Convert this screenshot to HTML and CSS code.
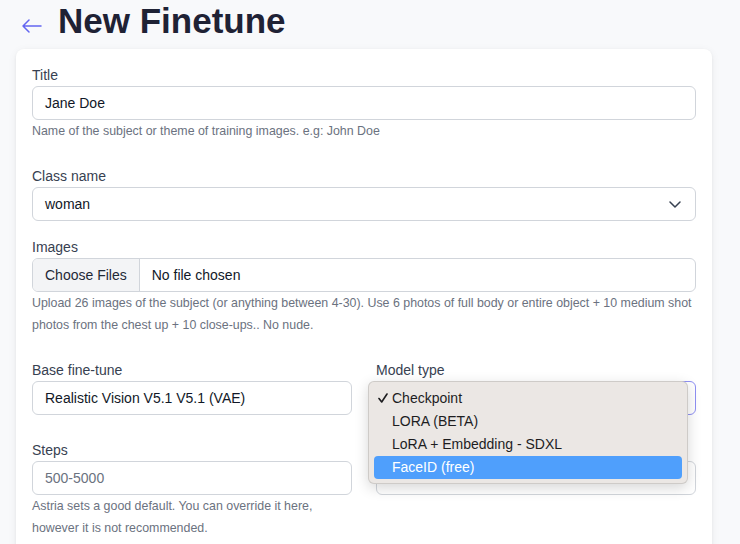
FILE: index.html
```html
<!DOCTYPE html>
<html lang="en">
<head>
<meta charset="utf-8">
<title>New Finetune</title>
<link rel="stylesheet" href="styles.css">
</head>
<body>
<div class="page">
  <header class="header">
    <svg class="back" width="20" height="14" viewBox="0 0 20 14" fill="none" stroke="#6366f1" stroke-width="1.5" stroke-linecap="round" stroke-linejoin="round"><path d="M7 1 L1 7 L7 13 M1 7 H19"/></svg>
    <h1 class="title">New Finetune</h1>
  </header>
  <main class="card">
    <div class="field">
      <label class="label">Title</label>
      <div class="input">Jane Doe</div>
      <p class="help">Name of the subject or theme of training images. e.g: John Doe</p>
    </div>
    <div class="field">
      <label class="label">Class name</label>
      <div class="input select">
        <span>woman</span>
        <svg width="12" height="7" viewBox="0 0 12 7" fill="none" stroke="#374151" stroke-width="1.5" stroke-linecap="round" stroke-linejoin="round"><path d="M1 1 L6 6 L11 1"/></svg>
      </div>
    </div>
    <div class="field">
      <label class="label">Images</label>
      <div class="input file">
        <span class="file-btn">Choose Files</span>
        <span class="file-name">No file chosen</span>
      </div>
      <p class="help">Upload 26 images of the subject (or anything between 4-30). Use 6 photos of full body or entire object + 10 medium shot photos from the chest up + 10 close-ups.. No nude.</p>
    </div>
    <div class="row row-first">
      <div class="col">
        <label class="label">Base fine-tune</label>
        <div class="input">Realistic Vision V5.1 V5.1 (VAE)</div>
      </div>
      <div class="col">
        <label class="label">Model type</label>
        <div class="select-wrap">
          <div class="input focused"></div>
          <ul class="menu">
            <li class="item checked"><svg class="check" width="10" height="10" viewBox="0 0 10 10" fill="none" stroke="#1d1d1f" stroke-width="1.6" stroke-linecap="round" stroke-linejoin="round"><path d="M1 5.5 L3.7 9 L9 1"/></svg>Checkpoint</li>
            <li class="item">LORA (BETA)</li>
            <li class="item">LoRA + Embedding - SDXL</li>
            <li class="item active">FaceID (free)</li>
          </ul>
        </div>
      </div>
    </div>
    <div class="row">
      <div class="col">
        <label class="label">Steps</label>
        <div class="input placeholder">500-5000</div>
        <p class="help">Astria sets a good default. You can override it here, however it is not recommended.</p>
      </div>
      <div class="col">
        <div class="label-space"></div>
        <div class="input"></div>
      </div>
    </div>
  </main>
</div>
</body>
</html>
```

FILE: styles.css
```css
* { box-sizing: border-box; }

html, body {
  margin: 0;
  background: #f8f9fb;
  font-family: "Liberation Sans", Arial, Helvetica, sans-serif;
  color: #111827;
}

.page {
  padding: 1px 0 0 16px;
}

.header {
  display: flex;
  align-items: flex-start;
  height: 40px;
  margin-bottom: 8px;
}

.back {
  margin: 18px 0 0 6px;
  flex: none;
}

.title {
  margin: 0 0 0 16px;
  font-size: 35px;
  line-height: 40px;
  font-weight: 700;
  color: #1f2235;
  letter-spacing: 0;
}

.card {
  width: 696px;
  background: #fff;
  border-radius: 8px;
  box-shadow: 0 1px 3px rgba(0, 0, 0, 0.06), 0 2px 10px rgba(0, 0, 0, 0.06);
  padding: 16px 16px 40px;
}

.field {
  margin-bottom: 16px;
}

.label {
  display: block;
  font-size: 14px;
  line-height: 20px;
  color: #374151;
  margin-bottom: 1px;
}

.label-space {
  height: 21px;
}

.input {
  height: 34px;
  border: 1px solid #d1d5db;
  border-radius: 6px;
  padding: 0 12px;
  font-size: 14px;
  line-height: 32px;
  color: #111827;
  background: #fff;
  white-space: nowrap;
  overflow: hidden;
}

.placeholder {
  color: #6b7280;
}

.select {
  display: flex;
  align-items: center;
  justify-content: space-between;
  padding-right: 14px;
}

.file {
  display: flex;
  padding: 0;
}

.file-btn {
  background: #f3f4f6;
  border-right: 1px solid #d1d5db;
  padding: 0 12px;
  color: #1f2937;
}

.file-name {
  padding-left: 12px;
}

.help {
  margin: 0;
  padding-bottom: 8px;
  font-size: 12.4px;
  line-height: 22px;
  color: #6b7280;
}

.row {
  display: grid;
  grid-template-columns: 1fr 1fr;
  column-gap: 24px;
}

.row-first {
  margin-bottom: 25px;
}

.select-wrap {
  position: relative;
}

.focused {
  border-color: #8f90f3;
}

.menu {
  position: absolute;
  top: 0;
  left: -8px;
  width: 320px;
  margin: 0;
  padding: 5px 5px 4px;
  list-style: none;
  background: #ebe7e4;
  border: 1px solid rgba(0, 0, 0, 0.12);
  border-radius: 6px;
  box-shadow: 0 4px 14px rgba(0, 0, 0, 0.16);
  z-index: 2;
}

.item {
  position: relative;
  height: 23px;
  line-height: 23px;
  padding-left: 18px;
  font-size: 14px;
  color: #1d1d1f;
  border-radius: 4px;
}

.check {
  position: absolute;
  left: 4px;
  top: 6px;
}

.active {
  background: #4f9ffc;
  color: #fff;
}
```
